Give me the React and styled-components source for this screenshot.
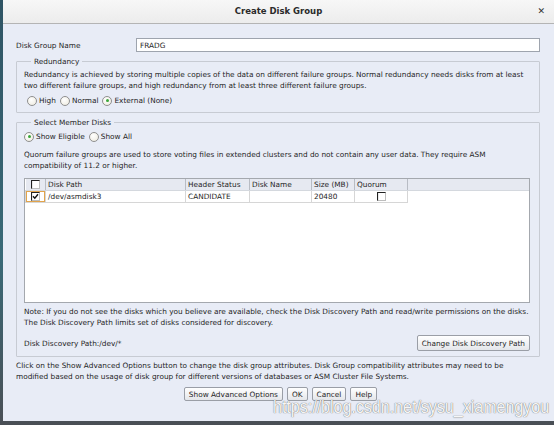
import React from "react";
import styled, { createGlobalStyle } from "styled-components";

const Global = createGlobalStyle`
  html, body { margin: 0; padding: 0; }
  body {
    width: 554px; height: 425px; overflow: hidden;
    background: linear-gradient(180deg, #2f5464 0%, #3a6a78 60%, #4a4f55 100%);
    font-family: "DejaVu Sans", "Liberation Sans", sans-serif;
  }
`;

const Window = styled.div`
  position: relative;
  margin-left: 3px;
  width: 551px;
  height: 421px;
  background: #e8ecf6;
  display: flex;
  flex-direction: column;
  color: #1e1e1e;
  font-size: 7.35px;
  line-height: 11px;
  overflow: hidden;
`;

const TitleBar = styled.div`
  height: 23px;
  border-bottom: 1px solid #b4b4b4;
  background: linear-gradient(180deg, #f7f7f7, #ececec);
  display: flex;
  align-items: center;
  justify-content: center;
  position: relative;
`;

const Title = styled.div`
  font-weight: bold;
  font-size: 8.5px;
  color: #2a2a2a;
`;

const Close = styled.div`
  position: absolute;
  right: 9px;
  top: 6px;
  font-size: 9px;
  font-weight: bold;
  color: #333;
`;

const Body = styled.div`
  padding: 0 14px 0 13px;
  display: flex;
  flex-direction: column;
`;

const NameRow = styled.div`
  margin-top: 14px;
  display: flex;
  align-items: center;
  height: 14px;
`;

const Label = styled.div`
  width: 120px;
  flex: none;
`;

const Input = styled.div`
  flex: 1;
  height: 12px;
  border: 1px solid #9ea4ae;
  background: #fff;
  padding-left: 3px;
  display: flex;
  align-items: center;
`;

const Group = styled.fieldset`
  margin: ${(p) => p.$mt}px 0 0 0;
  padding: ${(p) => p.$pt}px 9px ${(p) => p.$pb}px 7px;
  border: 1px solid #c7cbd3;
  border-radius: 1px;
  min-width: 0;
`;

const Legend = styled.legend`
  margin-left: 7px;
  padding: 0 3px;
  line-height: 11px;
`;

const Para = styled.div`
  margin-top: ${(p) => p.$mt || 0}px;
  padding-right: ${(p) => p.$pr || 0}px;
`;

const RadioRow = styled.div`
  margin-top: ${(p) => p.$mt || 0}px;
  padding-left: ${(p) => p.$pl || 0}px;
  display: flex;
  align-items: center;
  gap: 4px;
  height: 11px;
`;

const RadioItem = styled.label`
  display: flex;
  align-items: center;
  gap: 2px;
`;

const RadioCircle = styled.span`
  width: 8px;
  height: 8px;
  border-radius: 50%;
  border: 1px solid #8f8f8f;
  background: radial-gradient(circle at 40% 35%, #ffffff, #ece9dc);
  display: inline-flex;
  align-items: center;
  justify-content: center;
  box-sizing: content-box;
  &::after {
    content: "";
    width: 3px;
    height: 3px;
    border-radius: 50%;
    background: ${(p) => (p.$on ? "#3aa63a" : "transparent")};
  }
`;

const TableBox = styled.div`
  margin-top: 7px;
  height: 123px;
  border: 1px solid #a4a8ae;
  background: #fff;
`;

const Table = styled.table`
  border-collapse: collapse;
  width: 100%;
  table-layout: fixed;
`;

const Th = styled.th`
  font-weight: normal;
  text-align: left;
  height: 11px;
  padding: 0 0 0 2px;
  background: #e6e9f1;
  border-right: 1px solid #b8bcc4;
  border-bottom: 1px solid #d4d8de;
  white-space: nowrap;
  overflow: hidden;
  ${(p) => p.$center && "text-align: center; padding: 0;"}
  ${(p) => p.$filler && "border-right: none;"}
`;

const Td = styled.td`
  height: 10px;
  padding: 0 0 0 2px;
  border: 1px solid #d6d6d6;
  border-top: none;
  white-space: nowrap;
  ${(p) => p.$center && "text-align: center; padding: 0;"}
  ${(p) => p.$focus && "box-shadow: inset 0 0 0 1px #e2a44c;"}
`;

const Filler = styled.td`
  border: none;
`;

const CheckGlyph = ({ checked }) => (
  <svg width="9" height="9" viewBox="0 0 9 9" style={{ verticalAlign: "middle" }}>
    <rect x="0.5" y="0.5" width="8" height="8" fill="#fff" stroke="#bdbdbd" />
    <path d="M0.5 8.5 V0.5 H8.5" fill="none" stroke="#222" strokeWidth="1.2" />
    {checked && <path d="M2 4.2 L3.8 6.2 L7 2.2" fill="none" stroke="#111" strokeWidth="1.4" />}
  </svg>
);

const PathRow = styled.div`
  margin-top: 7px;
  display: flex;
  align-items: center;
  justify-content: space-between;
  height: 16px;
`;

const Button = styled.button`
  font-family: inherit;
  font-size: 7.35px;
  line-height: 11px;
  color: #1e1e1e;
  height: ${(p) => p.$h || 14}px;
  padding: 0 ${(p) => p.$px || 4}px;
  border: 1px solid #9a9ea6;
  border-radius: 2px;
  background: linear-gradient(180deg, #ffffff, #e4e6ea);
  margin: 0;
  cursor: default;
`;

const ButtonBar = styled.div`
  margin-top: 5px;
  padding-left: 5px;
  display: flex;
  justify-content: center;
  gap: 4px;
`;

const Watermark = styled.div`
  position: absolute;
  left: 270px;
  top: 397px;
  font-family: "Liberation Sans", Arial, sans-serif;
  font-size: 18px;
  line-height: 20px;
  color: rgba(255, 255, 255, 0.95);
  text-shadow: 0 0 1px rgba(90, 90, 90, 0.8), 0 0 1px rgba(90, 90, 90, 0.6);
  white-space: nowrap;
  transform: scaleX(0.89);
  transform-origin: left center;
  pointer-events: none;
`;

const Radio = ({ on, children }) => (
  <RadioItem>
    <RadioCircle $on={on} />
    {children}
  </RadioItem>
);

export default function App() {
  return (
    <>
      <Global />
      <Window>
        <TitleBar>
          <Title>Create Disk Group</Title>
          <Close>✕</Close>
        </TitleBar>
        <Body>
          <NameRow>
            <Label>Disk Group Name</Label>
            <Input>FRADG</Input>
          </NameRow>

          <Group $mt={4} $pt={2} $pb={6}>
            <Legend>Redundancy</Legend>
            <Para>
              Redundancy is achieved by storing multiple copies of the data on different failure groups. Normal redundancy needs disks from at least two different failure groups, and high redundancy from at least three different failure groups.
            </Para>
            <RadioRow $mt={4} $pl={3}>
              <Radio>High</Radio>
              <Radio>Normal</Radio>
              <Radio on>External (None)</Radio>
            </RadioRow>
          </Group>

          <Group $mt={4} $pt={3} $pb={5}>
            <Legend>Select Member Disks</Legend>
            <RadioRow>
              <Radio on>Show Eligible</Radio>
              <Radio>Show All</Radio>
            </RadioRow>
            <Para $mt={7}>
              Quorum failure groups are used to store voting files in extended clusters and do not contain any user data. They require ASM compatibility of 11.2 or higher.
            </Para>
            <TableBox>
              <Table>
                <colgroup>
                  <col style={{ width: 20 }} />
                  <col style={{ width: 140 }} />
                  <col style={{ width: 64 }} />
                  <col style={{ width: 62 }} />
                  <col style={{ width: 43 }} />
                  <col style={{ width: 53 }} />
                  <col />
                </colgroup>
                <thead>
                  <tr>
                    <Th $center><CheckGlyph /></Th>
                    <Th>Disk Path</Th>
                    <Th>Header Status</Th>
                    <Th>Disk Name</Th>
                    <Th>Size (MB)</Th>
                    <Th>Quorum</Th>
                    <Th $filler />
                  </tr>
                </thead>
                <tbody>
                  <tr>
                    <Td $center $focus><CheckGlyph checked /></Td>
                    <Td>/dev/asmdisk3</Td>
                    <Td>CANDIDATE</Td>
                    <Td></Td>
                    <Td>20480</Td>
                    <Td $center><CheckGlyph /></Td>
                    <Filler />
                  </tr>
                </tbody>
              </Table>
            </TableBox>
            <Para $mt={3}>
              Note: If you do not see the disks which you believe are available, check the Disk Discovery Path and read/write permissions on the disks. The Disk Discovery Path limits set of disks considered for discovery.
            </Para>
            <PathRow>
              <span>Disk Discovery Path:/dev/*</span>
              <Button $h={16} $px={4}>Change Disk Discovery Path</Button>
            </PathRow>
          </Group>

          <Para $mt={3} $pr={12}>
            Click on the Show Advanced Options button to change the disk group attributes. Disk Group compatibility attributes may need to be modified based on the usage of disk group for different versions of databases or ASM Cluster File Systems.
          </Para>
          <ButtonBar>
            <Button>Show Advanced Options</Button>
            <Button>OK</Button>
            <Button>Cancel</Button>
            <Button>Help</Button>
          </ButtonBar>
        </Body>
        <Watermark>https://blog.csdn.net/sysu_xiamengyou</Watermark>
      </Window>
    </>
  );
}
